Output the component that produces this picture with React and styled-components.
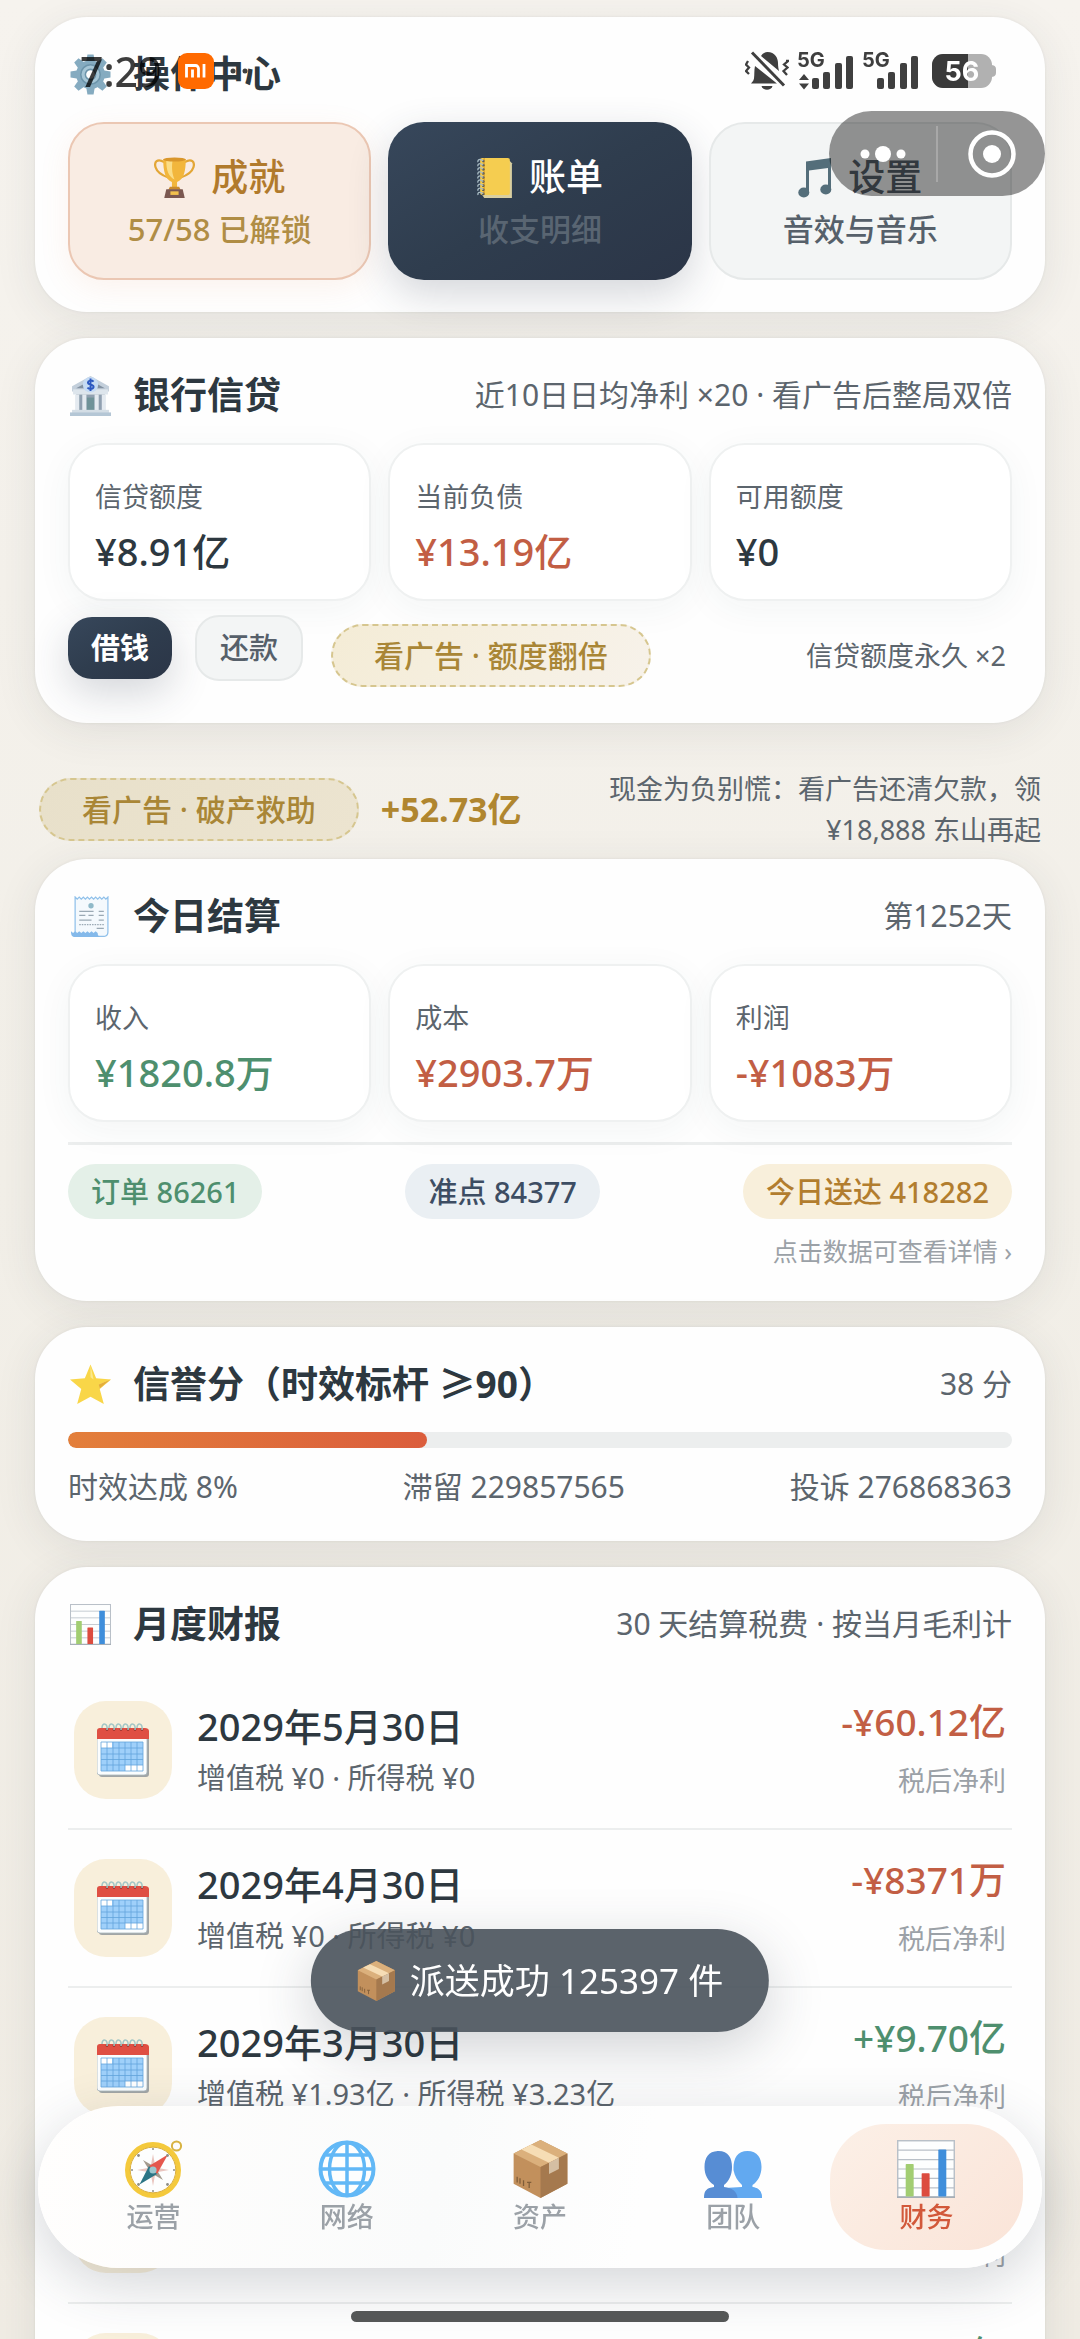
import { useState } from "react";
import styled, { createGlobalStyle } from "styled-components";

const GlobalStyle = createGlobalStyle`
    * {
        box-sizing: border-box;
    }

    body {
        margin: 0;
        font-family: "Noto Sans", "Noto Sans CJK SC", sans-serif;
        color: #2d3840;
    }

    button {
        font-family: inherit;
        border: none;
        cursor: pointer;
    }

    h2, p {
        margin: 0;
    }

    svg {
        display: block;
        flex-shrink: 0;
    }
`

const colors = {
    dark: '#2d3840',
    soft: '#5c656d',
    muted: '#9ba1a7',
    red: '#c25e44',
    green: '#4e8f6e',
    gold: '#b0862f'
}

const Screen = styled.main`
    height: 100vh;
    overflow-y: auto;
    scrollbar-width: none;
    padding: 17px 35px 0;
    background: linear-gradient(180deg, #f6f3ee 0%, #f2efe8 50%, #f0ece4 100%);
`

const Card = styled.section`
    background-color: #fefefe;
    border-radius: 52px;
    padding: 32px 33px;
    margin-bottom: 26px;
    box-shadow: 0 8px 44px rgba(44, 56, 68, 0.09), 0 0 3px rgba(44, 56, 68, 0.08);
`

const CardHeader = styled.header`
    display: flex;
    align-items: center;
    justify-content: space-between;
    height: 50px;
    margin-bottom: 23px;
`

const CardTitle = styled.h2`
    display: flex;
    align-items: center;
    gap: 22px;
    padding-left: 2px;
    font-size: 37px;
    line-height: 50px;
    font-weight: 700;
    white-space: nowrap;
`

const CardNote = styled.p`
    font-size: 30px;
    line-height: 44px;
    color: ${colors.soft};
    white-space: nowrap;
`

const Columns = styled.div`
    display: grid;
    grid-template-columns: repeat(3, 1fr);
    gap: 17px;
`

const tones = {
    gold: `
        background: #f9ece3;
        border-color: #ebc7b3;
        color: #b17a2c;
        box-shadow: 0 8px 30px rgba(226, 140, 90, 0.1);
    `,
    dark: `
        background: linear-gradient(150deg, #37475b, #2f3d4e 50%, #2b3547);
        border-color: transparent;
        background-origin: border-box;
        color: #ffffff;
        box-shadow: 0 14px 40px rgba(44, 56, 76, 0.2);
    `,
    light: `
        background: #f3f5f5;
        border-color: #e6e9e9;
        color: #56606a;
    `
}

const ActionButton = styled.button`
    display: flex;
    flex-direction: column;
    align-items: center;
    padding: 27px 0 23px;
    border: 2px solid;
    border-radius: 36px;
    ${props => tones[props.$tone]}
`

const ActionTitle = styled.span`
    display: flex;
    align-items: center;
    gap: 16px;
    font-size: 37px;
    line-height: 52px;
    font-weight: 500;
`

const ActionNote = styled.span`
    font-size: 31px;
    line-height: 52px;
    font-weight: 500;
    color: ${props => props.$color};
`

const StatBox = styled.div`
    padding: 32px 25px 22px;
    border: 2px solid #eff1f1;
    border-radius: 36px;
    background-color: #ffffff;
    box-shadow: 0 8px 36px rgba(44, 70, 76, 0.05);
`

const StatLabel = styled.p`
    font-size: 27px;
    line-height: 40px;
    color: ${colors.soft};
    margin-bottom: 8px;
`

const StatValue = styled.p`
    font-size: 38px;
    line-height: 52px;
    font-weight: 500;
    color: ${props => colors[props.$color]};
`

const LoanRow = styled.div`
    display: flex;
    align-items: flex-start;
    margin-top: 14px;
`

const LoanButtons = styled.div`
    display: flex;
    align-items: center;
    gap: 23px;
`

const SmallButton = styled.button`
    padding: 9px 23px;
    font-size: 29px;
    line-height: 44px;
    font-weight: ${props => props.$tone === 'dark' ? 700 : 500};
    border-radius: 24px;
    ${props => tones[props.$tone]}
    border: ${props => props.$tone === 'light' ? '2px solid #e6e9e9' : 'none'};
`

const AdRow = styled.div`
    flex: 1;
    display: flex;
    align-items: center;
    justify-content: space-between;
    padding: 9px 6px 4px 28px;
`

const AdButton = styled.button`
    padding: 7px 41px;
    border: 2px dashed #d6c68f;
    border-radius: 32px;
    background: ${props => props.$filled
        ? 'linear-gradient(120deg, #e8e0ca, #ece4d0)'
        : 'linear-gradient(120deg, #f4ecd6, #f7f2ea)'};
    color: #a98636;
    font-size: 30px;
    line-height: 45px;
    font-weight: 500;
    white-space: nowrap;
`

const AdHint = styled.p`
    font-size: 27px;
    line-height: 41px;
    color: ${colors.soft};
    text-align: right;
`

const RescueRow = styled.div`
    display: flex;
    align-items: center;
    padding: 19px 4px 9px;

    ${AdHint} {
        flex: 1;
        padding-left: 56px;
    }
`

const RescueAmount = styled.strong`
    margin-left: 22px;
    font-size: 34px;
    line-height: 46px;
    font-weight: 700;
    color: ${colors.gold};
`

const ChipRow = styled.div`
    display: flex;
    justify-content: space-between;
    margin-top: 20px;
    padding-top: 19px;
    border-top: 3px solid #eceeee;
`

const chipTones = {
    green: ['#e4f0e8', colors.green],
    blue: ['#eaeff3', '#3d4d63'],
    gold: ['#f8efdb', '#b27d2e']
}

const Chip = styled.span`
    padding: 0 23px;
    border-radius: 28px;
    font-size: 29px;
    line-height: 55px;
    font-weight: 500;
    background-color: ${props => chipTones[props.$tone][0]};
    color: ${props => chipTones[props.$tone][1]};
`

const DetailLink = styled.a`
    display: block;
    margin-top: 14px;
    font-size: 25px;
    line-height: 36px;
    text-align: right;
    text-decoration: none;
    color: ${colors.muted};
`

const Track = styled.div`
    height: 16px;
    border-radius: 8px;
    background-color: #eceeee;
    overflow: hidden;
`

const TrackFill = styled.div`
    height: 100%;
    border-radius: 8px;
    background: linear-gradient(90deg, #e37f3b, #db5d3c);
`

const ScoreRow = styled.div`
    display: flex;
    justify-content: space-between;
    margin-top: 17px;
    font-size: 30px;
    line-height: 44px;
    color: ${colors.soft};
`

const ReportList = styled.ul`
    list-style: none;
    margin: 0;
    padding: 0;
`

const ReportItem = styled.li`
    display: flex;
    align-items: center;
    padding: 28px 6px;
    border-bottom: 2px solid #eceeee;
`

const ReportIcon = styled.div`
    display: flex;
    align-items: center;
    justify-content: center;
    width: 98px;
    height: 98px;
    border-radius: 32px;
    background-color: #f8efdb;
`

const ReportText = styled.div`
    flex: 1;
    padding-left: 25px;
`

const ReportDate = styled.p`
    font-size: 38px;
    line-height: 52px;
    font-weight: 500;
    margin-bottom: 4px;
`

const ReportTax = styled.p`
    font-size: 29px;
    line-height: 44px;
    color: ${colors.soft};
`

const ReportProfit = styled.div`
    display: flex;
    flex-direction: column;
    justify-content: space-between;
    align-self: stretch;
    text-align: right;
`

const ProfitValue = styled.p`
    font-size: 37px;
    line-height: 44px;
    font-weight: 500;
    color: ${props => colors[props.$color]};
`

const ProfitLabel = styled.p`
    font-size: 27px;
    line-height: 38px;
    color: ${colors.muted};
`

const StatusBar = styled.div`
    position: fixed;
    top: 0;
    left: 0;
    right: 0;
    height: 142px;
    padding: 0 84px 0 80px;
    display: flex;
    align-items: center;
    justify-content: space-between;
    color: rgba(0, 0, 0, 0.76);
    pointer-events: none;
`

const StatusGroup = styled.div`
    display: flex;
    align-items: center;
    gap: ${props => props.$gap}px;
`

const Clock = styled.span`
    font-size: 41px;
    line-height: 50px;
    font-weight: 500;
`

const Capsule = styled.div`
    position: fixed;
    top: 111px;
    right: 35px;
    display: flex;
    align-items: center;
    width: 216px;
    height: 85px;
    border-radius: 43px;
    background-color: rgba(0, 0, 0, 0.41);
`

const CapsuleButton = styled.button`
    flex: 1;
    display: flex;
    justify-content: center;
    background: none;
    padding: 0;

    & + & {
        border-left: 2px solid rgba(255, 255, 255, 0.22);
        padding: 4px 0;
    }
`

const Toast = styled.div`
    position: fixed;
    bottom: 307px;
    left: 50%;
    transform: translateX(-50%);
    display: flex;
    align-items: center;
    gap: 14px;
    padding: 26px 46px;
    border-radius: 52px;
    background-color: rgba(73, 82, 91, 0.9);
    color: #ffffff;
    font-size: 35px;
    line-height: 51px;
    white-space: nowrap;
    box-shadow: 0 16px 56px rgba(44, 56, 68, 0.22);
`

const NavBar = styled.nav`
    position: fixed;
    bottom: 71px;
    left: 38px;
    right: 38px;
    display: flex;
    padding: 18px 19px;
    border-radius: 81px;
    background: linear-gradient(100deg, #fffefd, #fafbfb 40%, #fefefe 60%);
    box-shadow: 0 16px 56px rgba(44, 56, 68, 0.2);
`

const NavItem = styled.button`
    flex: 1;
    display: flex;
    flex-direction: column;
    align-items: center;
    padding: 16px 0 14px;
    border-radius: 56px;
    font-size: 27px;
    line-height: 38px;
    font-weight: 500;
    color: ${props => props.$active ? '#d2583a' : colors.muted};
    background: ${props => props.$active ? 'linear-gradient(135deg, #fcf0e7, #fae4d8)' : 'none'};
`

const HomeIndicator = styled.div`
    position: fixed;
    bottom: 17px;
    left: 50%;
    transform: translateX(-50%);
    width: 35%;
    height: 11px;
    border-radius: 6px;
    background-color: #555757;
`

function GearIcon() {
    const teeth = [0, 45, 90, 135, 180, 225, 270, 315]
    return (
        <svg width="41" height="41" viewBox="0 0 40 40" aria-hidden="true">
            {teeth.map(a => (
                <path key={a} d="M17 0.5h6l1.5 9h-9z" fill="#85abc0" transform={`rotate(${a} 20 20)`} />
            ))}
            <circle cx="20" cy="20" r="14" fill="#85abc0" />
            <circle cx="20" cy="20" r="9.5" fill="#a6c6d6" stroke="#6d95ab" strokeWidth="1.5" />
            <circle cx="20" cy="20" r="5" fill="#fefefe" stroke="#6d95ab" strokeWidth="1.5" />
        </svg>
    )
}

function TrophyIcon() {
    return (
        <svg width="41" height="41" viewBox="0 0 40 40" aria-hidden="true">
            <path d="M10 5C3 1 0 5 1.500 10S8 18 14 20M30 5c7-4 10 0 8.500 5S32 18 26 20" fill="none" stroke="#e3a636" strokeWidth="2.200" />
            <path d="M9 2h22c0 12-2 20-8.500 22.500V31h-5v-6.500C11 22 9 14 9 2z" fill="#f2b63c" />
            <path d="M12 4h6c-1 8 0 13 2 18C14 19 12 13 12 4z" fill="#fbdd86" />
            <ellipse cx="20" cy="2.500" rx="11" ry="2" fill="#d9962b" />
            <path d="M15.500 29h9l1.500 3H14z" fill="#c98a2c" />
            <path d="M12 31.500h16l2 8.500H10z" fill="#7b5750" />
            <rect x="16" y="33.500" width="8" height="3.500" fill="#f2c04d" />
        </svg>
    )
}

function LedgerIcon() {
    return (
        <svg width="36" height="41" viewBox="0 0 35 40" aria-hidden="true">
            <path d="M5 4h27l2 2v34H7l-2-3z" fill="#d9cfa0" />
            <rect x="3" y="1" width="29" height="36" rx="2" fill="#f5cd50" />
            <path d="M7 1v36" stroke="#dfa936" strokeWidth="1.500" />
            {[4, 8, 12, 16, 20, 24, 28, 32, 36].map(y => (
                <g key={y}>
                    <circle cx="6" cy={y} r="1.300" fill="#5c5a50" />
                    <path d={`M6 ${y}C3 ${y - 3} 0 ${y - 1} 1 ${y + 1}`} fill="none" stroke="#a9bcc4" strokeWidth="1.300" />
                </g>
            ))}
        </svg>
    )
}

function MusicIcon() {
    return (
        <svg width="34" height="41" viewBox="0 0 34 41" aria-hidden="true">
            <path d="M8 4.500L33 1v32h-3V11L11 13.500V36H8z" fill="#546e7a" />
            <ellipse cx="5.800" cy="35.500" rx="5.500" ry="5" fill="#546e7a" />
            <ellipse cx="27.800" cy="32.500" rx="5.500" ry="5" fill="#546e7a" />
        </svg>
    )
}

function BankIcon() {
    return (
        <svg width="41" height="41" viewBox="0 0 40 40" aria-hidden="true">
            <path d="M20 1L38 11v5H2v-5z" fill="#c3cfdb" />
            <path d="M20 5l14 8H6z" fill="#8291a1" />
            <rect x="3" y="14" width="34" height="5" fill="#dde5ec" />
            <rect x="6" y="19" width="28" height="16" fill="#90a0b0" />
            <path d="M5 19h4v16H5zM12 19h4v16h-4zM24 19h4v16h-4zM31 19h4v16h-4z" fill="#e4eaf0" />
            <rect x="16.500" y="22" width="7" height="13" fill="#6f9298" />
            <rect x="2" y="34" width="36" height="3" fill="#d3dde5" />
            <rect x="0" y="36.500" width="40" height="3.500" fill="#b4c6d5" />
            <circle cx="20" cy="9.500" r="7.500" fill="#c6dbf3" />
            <path d="M23 6.500c-2-2-5.500-1-5.500.8 0 2.800 5.500 1.500 5.500 4.200 0 2.200-4 2.800-6 .8M20 3.500v12" fill="none" stroke="#2c58c0" strokeWidth="1.900" />
        </svg>
    )
}

function ReceiptIcon() {
    return (
        <svg width="41" height="41" viewBox="0 0 40 40" aria-hidden="true">
            <path d="M5 1l2 2 2-2 2 2 2-2 2 2 2-2 2 2 2-2 2 2 2-2 2 2 2-2 2 2 2-2 2 2 2-2v34c0 3-2 4.500-5 4.500H5z" fill="#f4f9fd" stroke="#8fc0ea" strokeWidth="1.200" />
            <path d="M1 34.500l2 1.500 2-1.500 2 1.500 2-1.500 2 1.500 2-1.500 2 1.500 2-1.500 2 1.500 2-1.500 2 1.500 2-1.500 2 1.500c0 2 1 3.500 2.500 4H5c-3 0-4-2-4-5z" fill="#84b9ea" />
            <circle cx="20.500" cy="9.500" r="2.600" fill="#8fb9c9" />
            <path d="M9 15h14M28 15h5M9 19h6M18 19h5M28 19h5M9 23.500h12M28 23.500h5M26 31.500h7" stroke="#9aa9b4" strokeWidth="1.200" />
            <path d="M9 28h24" stroke="#9aa9b4" strokeWidth="1.200" strokeDasharray="1.500 1" />
        </svg>
    )
}

function StarIcon() {
    return (
        <svg width="41" height="41" viewBox="0 0 40 40" aria-hidden="true">
            <path d="M20 0.500l5.500 13.500 14.500 1-11 9.500 4 14.500L20 32 7 39l4-14.500L0 15l14.500-1z" fill="#f9d648" />
            <path d="M20 1v12l3 2zM28 20l11.500-5L29 24z" fill="#fbe98c" />
            <path d="M28 20l11.500-5L29 24z" fill="#e5ae3a" />
        </svg>
    )
}

function ChartIcon({ size = 41 }) {
    return (
        <svg width={size} height={size} viewBox="0 0 40 40" aria-hidden="true">
            <rect x="0.500" y="0.500" width="39" height="39" fill="#fdfefe" stroke="#b9c0c8" />
            <path d="M0 7h40M0 13.500h40M0 20h40M0 26.500h40M0 33h40" stroke="#b9c0c8" strokeWidth="0.800" />
            <path d="M0 39.500h40" stroke="#a6aeb6" strokeWidth="1.300" />
            <rect x="6" y="16.500" width="5.500" height="22.500" rx="0.500" fill="#a2cd72" />
            <rect x="17" y="23" width="5.500" height="16" rx="0.500" fill="#dc4c3f" />
            <rect x="28.500" y="6.500" width="5.500" height="32.500" rx="0.500" fill="#3f8edb" />
        </svg>
    )
}

function CalendarIcon() {
    const rings = [8, 15, 22, 29, 36, 43]
    return (
        <svg width="52" height="54" viewBox="0 0 52 54" aria-hidden="true">
            <rect x="2" y="8" width="50" height="46" rx="3" fill="#a1a5a6" />
            <rect x="0" y="6" width="50" height="46" rx="3" fill="#fbfdfe" stroke="#aab6bd" strokeWidth="0.800" />
            <path d="M0 16V8c0-2 1-3 3-3h45c2 0 4 1 4 3v8z" fill="#df4f43" />
            <rect x="4" y="19" width="42" height="29" fill="#9fd0fa" />
            <path d="M4 19h11v6H4zM28 42h18v6H28z" fill="#ffffff" />
            <path d="M4 19h42v29H4zM4 25h42M4 31h42M4 36.500h42M4 42h42M10 19v29M16 19v29M22 19v29M28 19v29M34 19v29M40 19v29" fill="none" stroke="#62a3dc" strokeWidth="0.800" />
            {rings.map(x => (
                <g key={x}>
                    <circle cx={x + 2} cy="6.500" r="1.300" fill="#8a2e28" />
                    <path d={`M${x + 2} 7C${x + 3} 0 ${x - 3} -1 ${x - 3} 5`} fill="none" stroke="#a2c6c5" strokeWidth="1.500" />
                </g>
            ))}
        </svg>
    )
}

function PackageIcon({ size = 39 }) {
    return (
        <svg width={size} height={size + 1} viewBox="0 0 40 41" aria-hidden="true">
            <path d="M20 0l19 9.500V31L20 41 1 31V9.500z" fill="#c2905c" />
            <path d="M20 0l19 9.500L20 19 1 9.500z" fill="#dbb07c" />
            <path d="M20 19v22l19-10V9.500z" fill="#a5794e" />
            <path d="M6.500 6.700l7-3.500L33 12.500 26 16z" fill="#f6ddb5" />
            <path d="M26 16l7-3.500v8L26 24z" fill="#d5bfa3" />
            <path d="M3.500 26v4M5.500 27v4M8 28.500v4M10.500 30h3M12 30v4" stroke="#7f5d39" strokeWidth="0.900" />
        </svg>
    )
}

function CompassIcon() {
    return (
        <svg width="58" height="58" viewBox="0 0 58 58" aria-hidden="true">
            <circle cx="51.500" cy="6" r="4.600" fill="none" stroke="#d8b342" strokeWidth="2" />
            <circle cx="28" cy="30" r="25.500" fill="#fdfefe" stroke="#f4c93c" strokeWidth="5" />
            <circle cx="28" cy="30" r="22.800" fill="none" stroke="#d6a72f" strokeWidth="0.900" />
            <path d="M28 14l2.500 13.500L44 30l-13.500 2.500L28 46l-2.500-13.500L12 30l13.500-2.500z" fill="#e9c5bf" />
            <path d="M18 20l12 7 8 13-12-7z" fill="#a39b8e" />
            <path d="M43 14.500L32 34l-8-8z" fill="#e5574d" />
            <path d="M14.500 44.500L24 26l8 8z" fill="#2c7585" />
            <circle cx="28" cy="30" r="3.600" fill="#9cc7ce" />
            <g fill="#8e8e86">
                <circle cx="28" cy="9" r="1" /><circle cx="28" cy="51" r="1" />
                <circle cx="7" cy="30" r="1" /><circle cx="49" cy="30" r="1" />
                <circle cx="13.500" cy="15.500" r="1.400" /><circle cx="42.500" cy="44.500" r="1.400" />
                <circle cx="42.500" cy="15.500" r="1.400" /><circle cx="13.500" cy="44.500" r="1.400" />
            </g>
        </svg>
    )
}

function GlobeIcon() {
    return (
        <svg width="58" height="58" viewBox="0 0 58 58" aria-hidden="true">
            <g fill="none" stroke="#62b8f6" strokeWidth="4">
                <circle cx="29" cy="29" r="26.500" fill="#fdfefe" />
                <ellipse cx="29" cy="29" rx="17.500" ry="26.500" strokeWidth="3.500" />
                <path d="M29 2v54M2 29h54M8 15h42M8 43h42" strokeWidth="3.500" />
            </g>
        </svg>
    )
}

function PeopleIcon() {
    return (
        <svg width="58" height="58" viewBox="0 0 58 58" aria-hidden="true">
            <path d="M29.500 28c0-10 4-17 14-17s14 7 14 16c0 8-4 15-9 18v2c5 1 9 3 9.500 11H29z" fill="#62a9f0" />
            <path d="M29.500 30c1 6 4 11 8.500 15v2.500l-9 2.500-9-2.500V45c5-3 8.500-9 9.500-15z" fill="#fdfefe" />
            <path d="M20 48c6 1 12 3 14 10h24c0-8-4-10-10-11H38z" fill="#62a9f0" />
            <path d="M0.500 27c0-9 4-16 14-16S28 18 28 27c0 8-3 14-8 18v2c8 1 13 4 13.500 11H0c0-8 3-10 10-11v-2c-6-4-9.500-10-9.500-18z" fill="#578dd4" />
        </svg>
    )
}

function MiBadge() {
    return (
        <svg width="36" height="36" viewBox="0 0 36 36" aria-label="小米">
            <rect width="36" height="36" rx="9" fill="#ff6a00" />
            <path d="M8.500 24.500V12.500H17.500a3 3 0 0 1 3 3v9M14.500 16.500v8M26 11v13.500" fill="none" stroke="#ffffff" strokeWidth="2.800" />
        </svg>
    )
}

function MutedBellIcon() {
    return (
        <svg width="44" height="40" viewBox="0 0 44 40" fill="#3f3f3f" aria-label="静音">
            <path d="M16 5C18 2 20 1 22.500 1 30 1 33 7 33 12c0 3 .5 6 1 8zM10 15l22 17.500H6c1-1.500 2.500-2 3-5 .6-4 0-8 1-12.500z" />
            <path d="M16.500 35h11c-1 5-10 5-11 0z" />
            <path d="M7 1.500l32 33" stroke="#fefefe" strokeWidth="7" />
            <path d="M7 1.500l32 33" stroke="#3f3f3f" strokeWidth="3" />
            <path d="M3 10l-2 3.500 3 3-3 3.500 3 3M41 10l2 0-4 3.500 3.500 3L38.500 20l3.500 4" fill="none" stroke="#3f3f3f" strokeWidth="2.300" />
        </svg>
    )
}

const SignalLabel = styled.text`
    font-family: Inter, sans-serif;
    font-size: 20px;
    font-weight: 700;
`

function SignalIcon({ transfer }) {
    return (
        <svg width="57" height="38" viewBox="0 0 57 38" fill="#3f3f3f" aria-hidden="true">
            <SignalLabel x="0" y="15">5G</SignalLabel>
            {transfer && <path d="M7 22l5 6H2zM7 37.500l5-6H2z" />}
            <rect x="15" y="26" width="7" height="11" rx="2" />
            <rect x="26" y="20" width="7" height="17" rx="2" />
            <rect x="38" y="11" width="7" height="26" rx="2" />
            <rect x="49" y="4" width="7" height="33" rx="2" />
        </svg>
    )
}

const BatteryLabel = styled.text`
    font-family: Inter, sans-serif;
    font-size: 27px;
    font-weight: 700;
    fill: #ffffff;
`

function BatteryIcon() {
    return (
        <svg width="69" height="34" viewBox="-5 0 69 34" aria-hidden="true">
            <path d="M58 11h1c3 0 5 1.500 5 4v4c0 2.500-2 4-5 4h-1z" fill="#b1b1b1" />
            <rect width="60" height="34" rx="11" fill="#b1b1b1" />
            <path d="M11 0h25v34H11A11 11 0 0 1 0 23V11A11 11 0 0 1 11 0z" fill="#3a3a3a" />
            <BatteryLabel x="30" y="27" textAnchor="middle">56</BatteryLabel>
        </svg>
    )
}

function Stat({ label, value, color = 'dark' }) {
    return (
        <StatBox>
            <StatLabel>{label}</StatLabel>
            <StatValue $color={color}>{value}</StatValue>
        </StatBox>
    )
}

function Header({ icon, title, note }) {
    return (
        <CardHeader>
            <CardTitle>{icon}{title}</CardTitle>
            {note && <CardNote>{note}</CardNote>}
        </CardHeader>
    )
}

const reports = [
    { date: '2029年5月30日', tax: '增值税 ¥0 · 所得税 ¥0', value: '-¥60.12亿', color: 'red' },
    { date: '2029年4月30日', tax: '增值税 ¥0 · 所得税 ¥0', value: '-¥8371万', color: 'red' },
    { date: '2029年3月30日', tax: '增值税 ¥1.93亿 · 所得税 ¥3.23亿', value: '+¥9.70亿', color: 'green' },
    { date: '2029年2月30日', tax: '增值税 ¥1.90亿 · 所得税 ¥3.18亿', value: '+¥9.55亿', color: 'green' },
    { date: '2029年1月30日', tax: '增值税 ¥1.88亿 · 所得税 ¥3.15亿', value: '+¥9.47亿', color: 'green' }
]

const tabs = [
    { name: '运营', icon: <CompassIcon /> },
    { name: '网络', icon: <GlobeIcon /> },
    { name: '资产', icon: <PackageIcon size={57} /> },
    { name: '团队', icon: <PeopleIcon /> },
    { name: '财务', icon: <ChartIcon size={58} /> }
]

function App() {
    const [tab, setTab] = useState('财务')
    const score = 38

    return (
        <>
            <GlobalStyle />
            <Screen>
                <Card>
                    <Header icon={<GearIcon />} title="操作中心" />
                    <Columns>
                        <ActionButton $tone="gold">
                            <ActionTitle><TrophyIcon />成就</ActionTitle>
                            <ActionNote $color="#b08d45">57/58 已解锁</ActionNote>
                        </ActionButton>
                        <ActionButton $tone="dark">
                            <ActionTitle><LedgerIcon />账单</ActionTitle>
                            <ActionNote $color="#596572">收支明细</ActionNote>
                        </ActionButton>
                        <ActionButton $tone="light">
                            <ActionTitle><MusicIcon />设置</ActionTitle>
                            <ActionNote $color="#56606a">音效与音乐</ActionNote>
                        </ActionButton>
                    </Columns>
                </Card>

                <Card>
                    <Header icon={<BankIcon />} title="银行信贷" note="近10日日均净利 ×20 · 看广告后整局双倍" />
                    <Columns>
                        <Stat label="信贷额度" value="¥8.91亿" />
                        <Stat label="当前负债" value="¥13.19亿" color="red" />
                        <Stat label="可用额度" value="¥0" />
                    </Columns>
                    <LoanRow>
                        <LoanButtons>
                            <SmallButton $tone="dark">借钱</SmallButton>
                            <SmallButton $tone="light">还款</SmallButton>
                        </LoanButtons>
                        <AdRow>
                            <AdButton>看广告 · 额度翻倍</AdButton>
                            <AdHint>信贷额度永久 ×2</AdHint>
                        </AdRow>
                    </LoanRow>
                </Card>

                <RescueRow>
                    <AdButton $filled>看广告 · 破产救助</AdButton>
                    <RescueAmount>+52.73亿</RescueAmount>
                    <AdHint>现金为负别慌：看广告还清欠款，领 ¥18,888 东山再起</AdHint>
                </RescueRow>

                <Card>
                    <Header icon={<ReceiptIcon />} title="今日结算" note="第1252天" />
                    <Columns>
                        <Stat label="收入" value="¥1820.8万" color="green" />
                        <Stat label="成本" value="¥2903.7万" color="red" />
                        <Stat label="利润" value="-¥1083万" color="red" />
                    </Columns>
                    <ChipRow>
                        <Chip $tone="green">订单 86261</Chip>
                        <Chip $tone="blue">准点 84377</Chip>
                        <Chip $tone="gold">今日送达 418282</Chip>
                    </ChipRow>
                    <DetailLink href="#detail">点击数据可查看详情 ›</DetailLink>
                </Card>

                <Card>
                    <Header icon={<StarIcon />} title="信誉分（时效标杆 ≥90）" note={`${score} 分`} />
                    <Track role="progressbar" aria-label="信誉分" aria-valuenow={score}>
                        <TrackFill style={{ width: `${score}%` }} />
                    </Track>
                    <ScoreRow>
                        <span>时效达成 8%</span>
                        <span>滞留 229857565</span>
                        <span>投诉 276868363</span>
                    </ScoreRow>
                </Card>

                <Card>
                    <Header icon={<ChartIcon />} title="月度财报" note="30 天结算税费 · 按当月毛利计" />
                    <ReportList>
                        {reports.map(report => (
                            <ReportItem key={report.date}>
                                <ReportIcon><CalendarIcon /></ReportIcon>
                                <ReportText>
                                    <ReportDate>{report.date}</ReportDate>
                                    <ReportTax>{report.tax}</ReportTax>
                                </ReportText>
                                <ReportProfit>
                                    <ProfitValue $color={report.color}>{report.value}</ProfitValue>
                                    <ProfitLabel>税后净利</ProfitLabel>
                                </ReportProfit>
                            </ReportItem>
                        ))}
                    </ReportList>
                </Card>
            </Screen>

            <StatusBar>
                <StatusGroup $gap={16}>
                    <Clock>7:29</Clock>
                    <MiBadge />
                    <svg width="18" height="6" viewBox="0 0 18 6" fill="#3f3f3f" aria-hidden="true">
                        <circle cx="3" cy="3" r="2.500" />
                        <circle cx="15" cy="3" r="2.500" />
                    </svg>
                </StatusGroup>
                <StatusGroup $gap={8}>
                    <MutedBellIcon />
                    <SignalIcon transfer />
                    <SignalIcon />
                    <BatteryIcon />
                </StatusGroup>
            </StatusBar>

            <Capsule>
                <CapsuleButton aria-label="更多">
                    <svg width="48" height="18" viewBox="0 0 48 18" fill="#ffffff">
                        <circle cx="6" cy="9" r="4.500" />
                        <circle cx="24" cy="9" r="8" />
                        <circle cx="42" cy="9" r="4.500" />
                    </svg>
                </CapsuleButton>
                <CapsuleButton aria-label="关闭">
                    <svg width="48" height="48" viewBox="0 0 48 48" fill="#ffffff">
                        <circle cx="24" cy="24" r="21.500" fill="none" stroke="#ffffff" strokeWidth="4.500" />
                        <circle cx="24" cy="24" r="9" />
                    </svg>
                </CapsuleButton>
            </Capsule>

            <Toast role="status"><PackageIcon />派送成功 125397 件</Toast>

            <NavBar>
                {tabs.map(item => (
                    <NavItem key={item.name} $active={item.name === tab} onClick={() => setTab(item.name)}>
                        {item.icon}
                        {item.name}
                    </NavItem>
                ))}
            </NavBar>
            <HomeIndicator />
        </>
    )
}

export default App;
